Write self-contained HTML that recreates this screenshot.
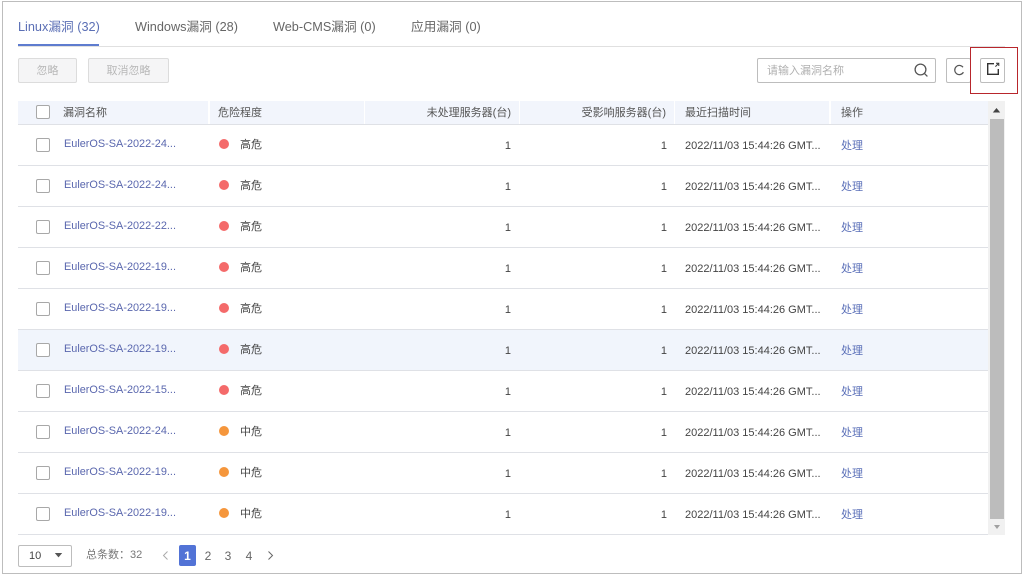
<!DOCTYPE html>
<html><head><meta charset="utf-8">
<style>
html,body{margin:0;padding:0;background:#fff}
body{width:1024px;height:577px;position:relative;overflow:hidden;font-family:"Liberation Sans","Noto Sans CJK SC",sans-serif;font-size:11px;color:#444}
.a{position:absolute;white-space:nowrap}
.tab{top:19px;font-size:12.7px;line-height:16px;color:#666}
.btn{box-sizing:border-box;border:1px solid #dcdcdc;background:#f5f5f6;color:#b8b8b8;border-radius:2px;text-align:center;top:58px;height:25px;line-height:25px}
.th{top:101px;height:23px;line-height:25px;background:#f2f5fc;color:#555;box-sizing:border-box;padding:0 8px}
.line{left:18px;width:970px;height:1px;background:#dfe1e6}
.cb{left:36px;width:12px;height:12px;border:1px solid #a8a8a8;border-radius:2px;background:#fff}
.lk{left:64px;color:#5a67ae;font-size:10.9px;line-height:18px}
.dot{left:219px;width:10px;height:10px;border-radius:50%}
.lv{left:240px;line-height:18px;color:#444}
.n{line-height:18px;color:#444;text-align:right;width:20px}
.t{left:685px;line-height:18px;color:#444;font-size:11px}
.op{left:841px;line-height:18px;color:#5a6fb8}
.pg{top:545px;height:21px;line-height:22px;color:#666;text-align:center;font-size:12px}
</style></head><body>
<div class="a" style="left:2px;top:1px;width:1018px;height:571px;border:1px solid #bdbdbd"></div>

<div class="a tab" style="left:18px;color:#5b6fb5">Linux漏洞 (32)</div>
<div class="a tab" style="left:135px">Windows漏洞 (28)</div>
<div class="a tab" style="left:273px">Web-CMS漏洞 (0)</div>
<div class="a tab" style="left:411px">应用漏洞 (0)</div>
<div class="a" style="left:18px;top:46px;width:987px;height:1px;background:#e0e0e0"></div>
<div class="a" style="left:18px;top:44px;width:81px;height:2px;background:#5e7ccf"></div>

<div class="a btn" style="left:18px;width:59px">忽略</div>
<div class="a btn" style="left:88px;width:81px">取消忽略</div>

<div class="a" style="left:757px;top:58px;width:179px;height:25px;box-sizing:border-box;border:1px solid #bdbdbd;border-radius:2px;line-height:25px;padding-left:9px;color:#b0b0b0">请输入漏洞名称</div>
<svg class="a" style="left:912px;top:61px" width="18" height="18" viewBox="0 0 18 18" fill="none" stroke="#555" stroke-width="1.3"><circle cx="8.5" cy="8.5" r="5.4"/><path d="M12.4 12.4L15.4 15.4"/></svg>
<div class="a" style="left:946px;top:58px;width:25px;height:25px;box-sizing:border-box;border:1px solid #bdbdbd;border-radius:2px"></div>
<svg class="a" style="left:951px;top:62px" width="16" height="16" viewBox="0 0 16 16" fill="none" stroke="#555" stroke-width="1.2"><path d="M12 5.2A4.6 4.6 0 1 0 12.4 10.2"/></svg>
<div class="a" style="left:980px;top:58px;width:25px;height:25px;box-sizing:border-box;border:1px solid #bdbdbd;border-radius:2px"></div>
<svg class="a" style="left:985px;top:61px" width="17" height="17" viewBox="0 0 17 17" fill="none" stroke="#333" stroke-width="1.4"><path d="M9 2.7H2.7V13.3H13.3V8"/><path d="M10.4 5.6L13.4 2.6" stroke-width="1"/><path d="M11 2.2H13.8V5" stroke-width="1"/></svg>
<div class="a" style="left:970px;top:47px;width:46px;height:45px;border:1px solid #b8262c"></div>

<div class="a th" style="left:18px;width:190px;padding-left:45px">漏洞名称</div>
<div class="a th" style="left:210px;width:154px">危险程度</div>
<div class="a th" style="left:365px;width:154px;text-align:right">未处理服务器(台)</div>
<div class="a th" style="left:520px;width:154px;text-align:right">受影响服务器(台)</div>
<div class="a th" style="left:675px;width:154px;padding-left:10px">最近扫描时间</div>
<div class="a th" style="left:831px;width:157px;padding-left:10px">操作</div>
<div class="a cb" style="top:105px;width:12px;height:12px"></div>
<div class="a line" style="top:124px"></div>

<div class="a" style="left:18px;top:330px;width:970px;height:40px;background:#f1f5fc"></div>
<div class="a line" style="top:329px"></div>

<div class="a cb" style="top:138px"></div><div class="a lk" style="top:135px">EulerOS-SA-2022-24...</div><div class="a dot" style="top:139px;background:#f46a6a"></div><div class="a lv" style="top:136px">高危</div><div class="a n" style="left:491px;top:137px">1</div><div class="a n" style="left:647px;top:137px">1</div><div class="a t" style="top:137px">2022/11/03 15:44:26 GMT...</div><div class="a op" style="top:137px">处理</div><div class="a line" style="top:165px"></div>
<div class="a cb" style="top:179px"></div><div class="a lk" style="top:176px">EulerOS-SA-2022-24...</div><div class="a dot" style="top:180px;background:#f46a6a"></div><div class="a lv" style="top:177px">高危</div><div class="a n" style="left:491px;top:178px">1</div><div class="a n" style="left:647px;top:178px">1</div><div class="a t" style="top:178px">2022/11/03 15:44:26 GMT...</div><div class="a op" style="top:178px">处理</div><div class="a line" style="top:206px"></div>
<div class="a cb" style="top:220px"></div><div class="a lk" style="top:217px">EulerOS-SA-2022-22...</div><div class="a dot" style="top:221px;background:#f46a6a"></div><div class="a lv" style="top:218px">高危</div><div class="a n" style="left:491px;top:219px">1</div><div class="a n" style="left:647px;top:219px">1</div><div class="a t" style="top:219px">2022/11/03 15:44:26 GMT...</div><div class="a op" style="top:219px">处理</div><div class="a line" style="top:247px"></div>
<div class="a cb" style="top:261px"></div><div class="a lk" style="top:258px">EulerOS-SA-2022-19...</div><div class="a dot" style="top:262px;background:#f46a6a"></div><div class="a lv" style="top:259px">高危</div><div class="a n" style="left:491px;top:260px">1</div><div class="a n" style="left:647px;top:260px">1</div><div class="a t" style="top:260px">2022/11/03 15:44:26 GMT...</div><div class="a op" style="top:260px">处理</div><div class="a line" style="top:288px"></div>
<div class="a cb" style="top:302px"></div><div class="a lk" style="top:299px">EulerOS-SA-2022-19...</div><div class="a dot" style="top:303px;background:#f46a6a"></div><div class="a lv" style="top:300px">高危</div><div class="a n" style="left:491px;top:301px">1</div><div class="a n" style="left:647px;top:301px">1</div><div class="a t" style="top:301px">2022/11/03 15:44:26 GMT...</div><div class="a op" style="top:301px">处理</div>
<div class="a cb" style="top:343px"></div><div class="a lk" style="top:340px">EulerOS-SA-2022-19...</div><div class="a dot" style="top:344px;background:#f46a6a"></div><div class="a lv" style="top:341px">高危</div><div class="a n" style="left:491px;top:342px">1</div><div class="a n" style="left:647px;top:342px">1</div><div class="a t" style="top:342px">2022/11/03 15:44:26 GMT...</div><div class="a op" style="top:342px">处理</div><div class="a line" style="top:370px"></div>
<div class="a cb" style="top:384px"></div><div class="a lk" style="top:381px">EulerOS-SA-2022-15...</div><div class="a dot" style="top:385px;background:#f46a6a"></div><div class="a lv" style="top:382px">高危</div><div class="a n" style="left:491px;top:383px">1</div><div class="a n" style="left:647px;top:383px">1</div><div class="a t" style="top:383px">2022/11/03 15:44:26 GMT...</div><div class="a op" style="top:383px">处理</div><div class="a line" style="top:411px"></div>
<div class="a cb" style="top:425px"></div><div class="a lk" style="top:422px">EulerOS-SA-2022-24...</div><div class="a dot" style="top:426px;background:#f5963c"></div><div class="a lv" style="top:423px">中危</div><div class="a n" style="left:491px;top:424px">1</div><div class="a n" style="left:647px;top:424px">1</div><div class="a t" style="top:424px">2022/11/03 15:44:26 GMT...</div><div class="a op" style="top:424px">处理</div><div class="a line" style="top:452px"></div>
<div class="a cb" style="top:466px"></div><div class="a lk" style="top:463px">EulerOS-SA-2022-19...</div><div class="a dot" style="top:467px;background:#f5963c"></div><div class="a lv" style="top:464px">中危</div><div class="a n" style="left:491px;top:465px">1</div><div class="a n" style="left:647px;top:465px">1</div><div class="a t" style="top:465px">2022/11/03 15:44:26 GMT...</div><div class="a op" style="top:465px">处理</div><div class="a line" style="top:493px"></div>
<div class="a cb" style="top:507px"></div><div class="a lk" style="top:504px">EulerOS-SA-2022-19...</div><div class="a dot" style="top:508px;background:#f5963c"></div><div class="a lv" style="top:505px">中危</div><div class="a n" style="left:491px;top:506px">1</div><div class="a n" style="left:647px;top:506px">1</div><div class="a t" style="top:506px">2022/11/03 15:44:26 GMT...</div><div class="a op" style="top:506px">处理</div><div class="a line" style="top:534px"></div>

<div class="a" style="left:988px;top:101px;width:17px;height:434px;background:#f1f1f1"></div>
<div class="a" style="left:990px;top:119px;width:14px;height:400px;background:#bcbcbc"></div>
<svg class="a" style="left:989px;top:101px" width="16" height="18"><path d="M3.8 11.5L7.5 7L11.2 11.5Z" fill="#444"/></svg>
<svg class="a" style="left:989px;top:520px" width="16" height="14"><path d="M5 5L8 9L11 5Z" fill="#a0a0a0"/></svg>

<div class="a" style="left:18px;top:545px;width:54px;height:22px;box-sizing:border-box;border:1px solid #bdbdbd;border-radius:2px;line-height:20px;padding-left:10px;color:#444">10</div>
<svg class="a" style="left:54px;top:552px" width="10" height="8"><path d="M0.8 1H8.2L4.5 5.4Z" fill="#555"/></svg>
<div class="a" style="left:86px;top:545px;line-height:21px;color:#777">总条数：32</div>
<svg class="a" style="left:161px;top:550px" width="10" height="12" fill="none" stroke="#aaa" stroke-width="1"><path d="M6.5 1.5L2.5 5.5L6.5 9.5"/></svg>
<div class="a pg" style="left:179px;width:17px;background:#5273d6;color:#fff;border-radius:2px;font-weight:bold;top:545px;height:21px">1</div>
<div class="a pg" style="left:200px;width:16px">2</div>
<div class="a pg" style="left:220px;width:16px">3</div>
<div class="a pg" style="left:241px;width:16px">4</div>
<svg class="a" style="left:265px;top:550px" width="10" height="12" fill="none" stroke="#666" stroke-width="1"><path d="M3.5 1.5L7.5 5.5L3.5 9.5"/></svg>
</body></html>
